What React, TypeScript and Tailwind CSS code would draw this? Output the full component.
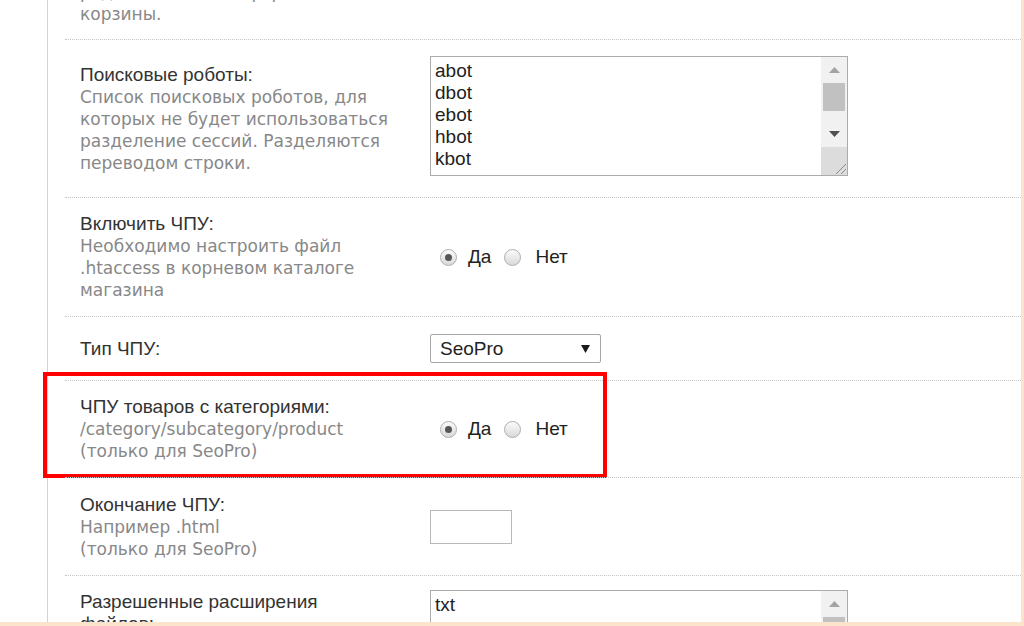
import type { ReactNode } from "react";

const sans = "font-['Liberation_Sans',Arial,sans-serif]";
const verdana = "font-['DejaVu_Sans',Verdana,sans-serif]";

const Radio = ({ checked }: { checked?: boolean }) => (
  <span className="flex h-[17px] w-[17px] items-center justify-center rounded-full border border-[#aeaeae] bg-linear-to-b from-[#fbfbfb] to-[#d9d9d9]">
    {checked && <span className="h-[7px] w-[7px] rounded-full bg-[#555]" />}
  </span>
);

const YesNo = () => (
  <div className={`flex items-center pl-[10px] ${sans} text-[19px] leading-[22px] text-[#222]`}>
    <Radio checked />
    <span className="ml-[11px]">Да</span>
    <span className="ml-[13px]">
      <Radio />
    </span>
    <span className="ml-[14px]">Нет</span>
  </div>
);

const FakeTextarea = ({ lines, className }: { lines: string[]; className?: string }) => (
  <div className={`flex w-[418px] overflow-hidden border border-[#ababab] bg-white ${className ?? ""}`}>
    <div className={`flex-1 pl-[4px] pt-[3px] ${sans} text-[19px] leading-[22px] text-[#222]`}>
      {lines.map((l) => (
        <div key={l}>{l}</div>
      ))}
    </div>
    <div className="flex w-[26px] shrink-0 flex-col bg-[#f1f1f1]">
      <div className="flex h-[26px] shrink-0 items-center justify-center">
        <svg width="11" height="6" viewBox="0 0 11 6">
          <polygon points="0,6 5.5,0 11,6" fill="#a3a3a3" />
        </svg>
      </div>
      <div className="mx-[2px] h-[28px] shrink-0 bg-[#c1c1c1]" />
      <div className="flex-1" />
      <div className="flex h-[26px] shrink-0 items-center justify-center">
        <svg width="11" height="6" viewBox="0 0 11 6">
          <polygon points="0,0 11,0 5.5,6" fill="#505050" />
        </svg>
      </div>
      <div className="flex h-[28px] shrink-0 items-end justify-end bg-[#dcdcdc]">
        <svg width="14" height="14" viewBox="0 0 14 14">
          <line x1="3" y1="13" x2="13" y2="3" stroke="#8a8a8a" strokeWidth="1" />
          <line x1="8" y1="13" x2="13" y2="8" stroke="#8a8a8a" strokeWidth="1" />
        </svg>
      </div>
    </div>
  </div>
);

type RowProps = {
  className: string;
  label: string[];
  desc: string[];
  children?: ReactNode;
  highlight?: boolean;
};

const Row = ({ className, label, desc, children, highlight }: RowProps) => (
  <div className={`relative flex border-t border-dotted border-[#c6c6c6] pl-[15px] ${className}`}>
    {highlight && (
      <div className="pointer-events-none absolute -top-[9px] -left-[22px] h-[106px] w-[564px] border-4 border-[#ff0000]" />
    )}
    <div className="w-[350px] shrink-0">
      {label.map((line) => (
        <div key={line} className={`${sans} text-[19px] leading-[22px] text-[#333]`}>
          {line}
        </div>
      ))}
      {desc.map((line) => (
        <div key={line} className={`${verdana} text-[17px] leading-[22px] text-[#888]`}>
          {line}
        </div>
      ))}
    </div>
    {children}
  </div>
);

export default function App() {
  return (
    <div className="flex h-[626px] w-[1024px] overflow-hidden border-r-[3px] border-b-[4px] border-[#fbe3cc] bg-white">
      <div className="w-[48px] shrink-0 border-r border-[#d3d3d3]" />
      <div className="ml-[17px] flex-1">
        <div className="flex h-[39px] flex-col justify-end pb-[14px] pl-[15px]">
          <div className={`${verdana} text-[17px] leading-[22px] text-[#888]`}>рядом с кнопкой оформления</div>
          <div className={`${verdana} text-[17px] leading-[22px] text-[#888]`}>корзины.</div>
        </div>

        <Row
          className="h-[158px] items-center"
          label={["Поисковые роботы:"]}
          desc={[
            "Список поисковых роботов, для",
            "которых не будет использоваться",
            "разделение сессий. Разделяются",
            "переводом строки.",
          ]}
        >
          <FakeTextarea className="-mt-[5px] h-[120px]" lines={["abot", "dbot", "ebot", "hbot", "kbot"]} />
        </Row>

        <Row
          className="h-[119px] items-center"
          label={["Включить ЧПУ:"]}
          desc={["Необходимо настроить файл", ".htaccess в корневом каталоге", "магазина"]}
        >
          <YesNo />
        </Row>

        <Row className="h-[64px] items-center" label={["Тип ЧПУ:"]} desc={[]}>
          <div className="flex h-[29px] w-[171px] items-center justify-between rounded-[2px] border border-[#a6a6a6] bg-white pr-[10px] pl-[9px]">
            <span className={`${sans} text-[19px] leading-[22px] text-[#222]`}>SeoPro</span>
            <svg width="9" height="8" viewBox="0 0 9 8">
              <polygon points="0,0 9,0 4.5,8" fill="#1a1a1a" />
            </svg>
          </div>
        </Row>

        <Row
          className="h-[97px] items-center"
          label={["ЧПУ товаров с категориями:"]}
          desc={["/category/subcategory/product", "(только для SeoPro)"]}
          highlight
        >
          <YesNo />
        </Row>

        <Row
          className="h-[98px] items-center"
          label={["Окончание ЧПУ:"]}
          desc={["Например .html", "(только для SeoPro)"]}
        >
          <div className="h-[34px] w-[82px] border border-[#b9b9b9] bg-white" />
        </Row>

        <Row
          className="h-[160px] items-start pt-[15px]"
          label={["Разрешенные расширения", "файлов:"]}
          desc={[]}
        >
          <FakeTextarea className="-mt-[1px] h-[120px]" lines={["txt", "png", "jpe", "jpeg", "jpg"]} />
        </Row>
      </div>
    </div>
  );
}
